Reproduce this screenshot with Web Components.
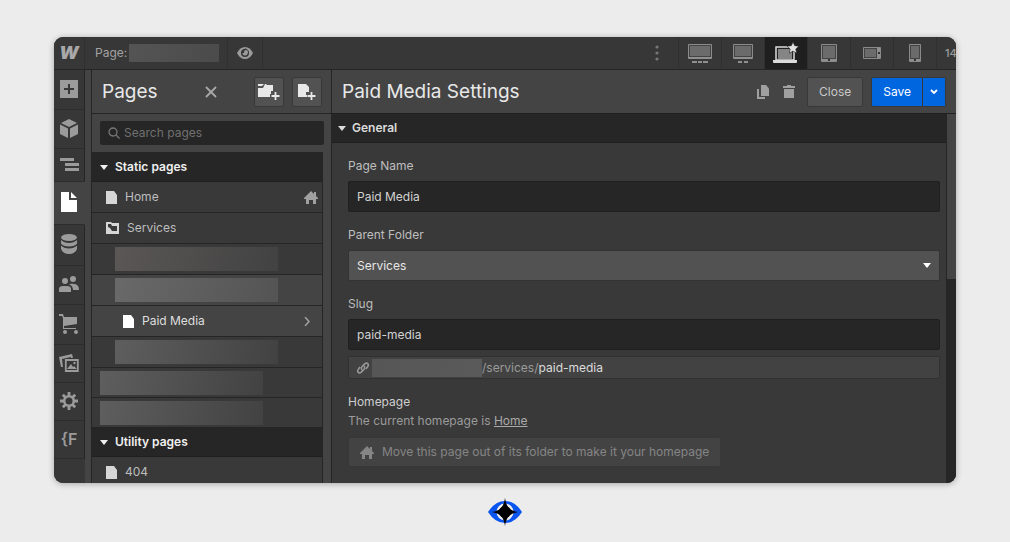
<!DOCTYPE html>
<html lang="en">
<head>
  <meta charset="utf-8">
  <meta name="viewport" content="width=device-width, initial-scale=1">
  <title>Paid Media Settings</title>
  <style>
    :root {
      --bar: #373737;
      --panel: #393939;
      --raised: #444444;
      --well: #262626;
      --line: #252525;
      --button: #525252;
      --text: #bebebe;
      --bright: #e8e8e8;
      --muted: #9b9b9b;
      --blue: #0066e0;
    }
    body {
      margin: 0;
      background: #ececec;
      color: var(--text);
      font: 12px/16px Inter, "Liberation Sans", sans-serif;
    }
  </style>
</head>
<body>
  <designer-app></designer-app>

  <template id="designerApp">
    <style>
      :host {
        display: grid;
        grid-template-rows: minmax(0, 1fr) auto;
        box-sizing: border-box;
        height: 100vh;
        padding: 37px 54px 0;
      }
      .window {
        display: grid;
        grid-template-rows: auto minmax(0, 1fr);
        overflow: hidden;
        border-radius: 9px;
        background: var(--panel);
        box-shadow: 0 1px 6px rgba(0, 0, 0, .3);
      }
      .work {
        display: grid;
        grid-template-columns: auto auto minmax(0, 1fr);
        min-height: 0;
      }
      footer {
        display: flex;
        justify-content: center;
        padding: 15px 0 16px;
      }
    </style>
    <div class="window">
      <top-bar></top-bar>
      <main class="work">
        <tool-rail></tool-rail>
        <pages-panel></pages-panel>
        <settings-panel></settings-panel>
      </main>
    </div>
    <footer><ui-icon name="brand"></ui-icon></footer>
  </template>

  <template id="topBar">
    <style>
      :host {
        display: flex;
        height: 32px;
        background: var(--bar);
        border-bottom: 1px solid var(--line);
        overflow: hidden;
      }
      button {
        display: grid;
        place-items: center;
        flex: none;
        width: 43px;
        padding: 0;
        border: 0;
        border-right: 1px solid #303030;
        background: none;
        color: var(--muted);
        font: inherit;
        box-sizing: border-box;
      }
      .logo {
        width: 31px;
        font-size: 18px;
        font-weight: 900;
        font-style: italic;
        color: #a8a8a8;
      }
      .page {
        display: flex;
        align-items: center;
        gap: 2px;
        padding: 0 8px 0 10px;
        border-right: 1px solid #303030;
        color: #a2a2a2;
      }
      .preview { width: 35px; }
      .more { width: 44px; margin-left: auto; }
      .on { background: #1f1f1f; }
      .width {
        flex: none;
        width: 19px;
        padding-left: 8px;
        box-sizing: border-box;
        line-height: 32px;
        font-size: 11px;
        font-weight: 500;
        white-space: nowrap;
        overflow: hidden;
        color: var(--muted);
      }
    </style>
    <button class="logo" aria-label="Menu">W</button>
    <div class="page">Page: <redacted-text style="--w: 90px; --h: 18px; --from: #545454; --to: #4b4b4b"></redacted-text></div>
    <button class="preview" aria-label="Preview"><ui-icon name="eye"></ui-icon></button>
    <button class="more" aria-label="More"><ui-icon name="dots"></ui-icon></button>
    <button aria-label="Large desktop"><ui-icon name="wide"></ui-icon></button>
    <button aria-label="Desktop"><ui-icon name="desktop"></ui-icon></button>
    <button class="on" aria-label="Base"><ui-icon name="laptop"></ui-icon></button>
    <button aria-label="Tablet"><ui-icon name="tablet"></ui-icon></button>
    <button aria-label="Mobile landscape"><ui-icon name="landscape"></ui-icon></button>
    <button aria-label="Mobile portrait"><ui-icon name="phone"></ui-icon></button>
    <div class="width">14</div>
  </template>

  <template id="toolRail">
    <style>
      :host {
        display: grid;
        grid-template-rows: 40px 39px 33px 43px 41px 39px 40px 38px 38px 38px;
        width: 37px;
        background: linear-gradient(90deg, var(--bar) 31px, var(--raised) 31px);
      }
      button {
        display: grid;
        place-items: center;
        width: 31px;
        padding: 0 0 2px;
        border: 0;
        border-right: 1px solid var(--line);
        border-bottom: 1px solid #2d2d2d;
        background: var(--bar);
        color: var(--muted);
        box-sizing: border-box;
        font: 600 16px/20px Inter, sans-serif;
      }
      .on {
        background: var(--raised);
        border-right-color: var(--raised);
        color: #fff;
      }
    </style>
    <button aria-label="Add"><ui-icon name="add"></ui-icon></button>
    <button aria-label="Components"><ui-icon name="cube"></ui-icon></button>
    <button aria-label="Navigator"><ui-icon name="navigator"></ui-icon></button>
    <button class="on" aria-label="Pages"><ui-icon name="page"></ui-icon></button>
    <button aria-label="CMS"><ui-icon name="database"></ui-icon></button>
    <button aria-label="Users"><ui-icon name="users"></ui-icon></button>
    <button aria-label="Ecommerce"><ui-icon name="cart"></ui-icon></button>
    <button aria-label="Assets"><ui-icon name="images"></ui-icon></button>
    <button aria-label="Settings"><ui-icon name="gear"></ui-icon></button>
    <button>{F</button>
  </template>

  <template id="pagesPanel">
    <style>
      :host {
        display: grid;
        grid-template-rows: auto auto minmax(0, 1fr);
        width: 240px;
        box-sizing: border-box;
        border-left: 1px solid var(--line);
        background: var(--raised);
      }
      header {
        display: flex;
        align-items: center;
        height: 43px;
        padding: 0 10px;
        border-bottom: 1px solid var(--line);
      }
      h2 {
        margin: 0;
        font-size: 19px;
        line-height: 24px;
        font-weight: 400;
        color: var(--bright);
      }
      header button {
        display: grid;
        place-items: center;
        width: 30px;
        height: 30px;
        padding: 0;
        margin-left: 8px;
        border: 1px solid #383838;
        border-radius: 2px;
        background: var(--button);
        color: var(--bright);
        box-sizing: border-box;
      }
      header .close {
        margin: 0 20px 0 auto;
        border: 0;
        background: none;
        color: #a8a8a8;
      }
      .search {
        display: flex;
        align-items: center;
        gap: 4px;
        height: 24px;
        margin: 7px 8px;
        padding: 0 8px;
        border-radius: 2px;
        background: var(--well);
        color: #777;
      }
      input {
        flex: 1;
        min-width: 0;
        padding: 0;
        border: 0;
        outline: 0;
        background: none;
        font: inherit;
        color: var(--text);
      }
      input::placeholder { color: #707070; opacity: 1; }
      .list {
        margin-right: 9px;
        border-top: 1px solid var(--line);
        border-right: 1px solid var(--line);
        background: var(--panel);
        overflow: hidden;
      }
    </style>
    <header>
      <h2>Pages</h2>
      <button class="close" aria-label="Close pages"><ui-icon name="close"></ui-icon></button>
      <button aria-label="New folder"><ui-icon name="newFolder"></ui-icon></button>
      <button aria-label="New page"><ui-icon name="newPage"></ui-icon></button>
    </header>
    <label class="search">
      <ui-icon name="search"></ui-icon>
      <input type="search" placeholder="Search pages" aria-label="Search pages">
    </label>
    <div class="list">
      <section-head>Static pages</section-head>
      <page-row icon="file" end="home">Home</page-row>
      <page-row icon="folder">Services</page-row>
      <page-row class="nested"><redacted-text style="--from: #5a5756"></redacted-text></page-row>
      <page-row class="nested raised"><redacted-text style="--from: #696969; --to: #545454"></redacted-text></page-row>
      <page-row class="nested raised" icon="file" end="chevron">Paid Media</page-row>
      <page-row class="nested"><redacted-text></redacted-text></page-row>
      <page-row class="root"><redacted-text></redacted-text></page-row>
      <page-row class="root"><redacted-text></redacted-text></page-row>
      <section-head>Utility pages</section-head>
      <page-row icon="file">404</page-row>
    </div>
  </template>

  <template id="sectionHead">
    <style>
      :host { display: block; background: var(--well); }
      button {
        display: flex;
        align-items: center;
        gap: 7px;
        width: 100%;
        height: 29px;
        padding: 0 8px;
        border: 0;
        border-bottom: 1px solid #202020;
        background: none;
        font: inherit;
        font-weight: 600;
        color: #f0f0f0;
        box-sizing: border-box;
      }
      :host(.tight) button { gap: 6px; padding-left: 6px; color: #dcdcdc; }
    </style>
    <button aria-expanded="true"><ui-icon name="caret"></ui-icon><slot></slot></button>
  </template>

  <template id="pageRow">
    <style>
      :host { display: block; --pad: 14px; --row: 31px; }
      :host(.nested) { --pad: 31px; color: #dedede; }
      :host(.root) { --row: 30px; }
      :host(.raised) { background: var(--raised); }
      :host(:not([icon])) { --pad: 8px; }
      :host(.nested:not([icon])) { --pad: 23px; }
      button {
        display: flex;
        align-items: center;
        gap: 8px;
        width: 100%;
        height: var(--row);
        padding: 0 4px 0 var(--pad);
        border: 0;
        border-bottom: 1px solid var(--line);
        background: none;
        color: inherit;
        font: inherit;
        box-sizing: border-box;
      }
      .start { color: #d6d6d6; }
      :host(.nested) .start { color: #fff; }
      .end { margin-left: auto; color: #a0a0a0; }
      :host(.nested) .end { margin-right: 8px; }
    </style>
    <button><slot></slot></button>
  </template>

  <template id="redactedText">
    <style>
      :host {
        display: block;
        width: var(--w, 163px);
        height: var(--h, 24px);
        background: linear-gradient(100deg, var(--from, #5e5e5e), var(--to, #424242));
      }
    </style>
  </template>

  <template id="settingsPanel">
    <style>
      :host {
        display: grid;
        grid-template-rows: auto minmax(0, 1fr);
        border-left: 1px solid var(--line);
        background: var(--panel);
      }
      header {
        display: flex;
        align-items: center;
        height: 43px;
        padding: 0 10px;
        border-bottom: 1px solid #202020;
        background: var(--raised);
      }
      h1 {
        margin: 0 auto 0 0;
        font-size: 19px;
        line-height: 24px;
        font-weight: 400;
        color: var(--bright);
      }
      button {
        height: 30px;
        padding: 0 11px;
        border: 1px solid #383838;
        border-radius: 2px;
        background: var(--button);
        color: #c8c8c8;
        font: inherit;
        box-sizing: border-box;
      }
      .icon {
        padding: 0;
        margin-right: 14px;
        border: 0;
        background: none;
        color: #a0a0a0;
      }
      .icon + .icon { margin-right: 12px; }
      .split { display: flex; margin-left: 8px; }
      .split button { background: var(--blue); color: #fff; }
      .split button:first-child { border-radius: 2px 0 0 2px; }
      .split button:last-child {
        padding: 0 7px;
        border-left: 0;
        border-radius: 0 2px 2px 0;
      }
      .body {
        display: grid;
        grid-template-columns: minmax(0, 1fr) 10px;
        min-height: 0;
        overflow: hidden;
      }
      .track { background: var(--well); border-left: 1px solid var(--line); }
      .thumb { height: 44%; background: var(--raised); }
      form {
        display: grid;
        gap: 15px;
        padding: 15px 6px 15px 16px;
      }
      .url {
        display: flex;
        align-items: center;
        height: 23px;
        margin-top: -9px;
        padding: 0 8px;
        border: 1px solid #313131;
        border-radius: 2px;
        background: #424242;
        box-sizing: border-box;
        color: var(--muted);
      }
      .url redacted-text { margin-left: 3px; }
      .url b { font-weight: 400; color: #dcdcdc; }
      h3 { margin: 0 0 3px; font: inherit; color: #cecece; }
      p { margin: 0 0 8px; color: var(--muted); }
      a { color: #aaa; }
      .home {
        display: flex;
        align-items: center;
        gap: 8px;
        background: #434343;
        color: #858585;
      }
    </style>
    <header>
      <h1>Paid Media Settings</h1>
      <button class="icon" aria-label="Duplicate page"><ui-icon name="copy"></ui-icon></button>
      <button class="icon" aria-label="Delete page"><ui-icon name="trash"></ui-icon></button>
      <button>Close</button>
      <div class="split">
        <button>Save</button>
        <button aria-label="Save options"><ui-icon name="down"></ui-icon></button>
      </div>
    </header>
    <div class="body">
      <div>
        <section-head class="tight">General</section-head>
        <form>
          <form-field label="Page Name" value="Paid Media"></form-field>
          <form-field label="Parent Folder" value="Services" type="select"></form-field>
          <form-field label="Slug" value="paid-media"></form-field>
          <div class="url">
            <ui-icon name="link"></ui-icon>
            <redacted-text style="--w: 110px; --h: 18px; --from: #565656; --to: #5a5a5a"></redacted-text>
            <span>/services/<b>paid-media</b></span>
          </div>
          <section>
            <h3>Homepage</h3>
            <p>The current homepage is <a href="#home">Home</a></p>
            <button class="home" type="button" disabled><ui-icon name="home"></ui-icon>Move this page out of its folder to make it your homepage</button>
          </section>
        </form>
      </div>
      <div class="track"><div class="thumb"></div></div>
    </div>
  </template>

  <template id="formField">
    <style>
      :host { display: grid; gap: 7px; }
      .box { display: grid; align-items: center; }
      input, select, ui-icon { grid-area: 1 / 1; }
      input, select {
        appearance: none;
        width: 100%;
        height: 31px;
        padding: 0 8px;
        border: 1px solid #202020;
        border-radius: 2px;
        background: var(--well);
        color: #d2d2d2;
        font: inherit;
        box-sizing: border-box;
      }
      select { background: var(--button); border-color: #333; color: #e8e8e8; }
      ui-icon {
        justify-self: end;
        margin-right: 9px;
        color: #fff;
        pointer-events: none;
      }
    </style>
    <label for="control"></label>
    <div class="box"></div>
  </template>

  <script>
    // name: [width, height, markup]
    const icons = {
      brand: [34, 28, '<path d="M0 14Q7 3 17 3t17 11q-7 11-17 11T0 14Z" fill="#0a55ef"/><circle cx="17" cy="14" r="8.500" fill="#f0f0f0"/><path d="M17 0q1 7 4 10 3 3 9 4-6 1-9 4-3 3-4 10-1-7-4-10-3-3-9-4 6-1 9-4 3-3 4-10Z" fill="#000"/><circle cx="17" cy="14" r="6" fill="#000"/>'],
      eye: [16, 12, '<path d="M0 6Q3 0 8 0t8 6q-3 6-8 6T0 6Z"/><circle cx="8" cy="6" r="4" fill="#373737"/><path d="M8 6V3.500q2.500 0 2.500 2.500T8 8.500 5.500 6Z"/><path d="M8 1.500a4.500 4.500 0 0 1 2 .5L8 6H4Z" fill="#373737"/><circle cx="9" cy="5" r="2"/>'],
      dots: [4, 16, '<g fill="#777"><circle cx="2" cy="2" r="1.600"/><circle cx="2" cy="8" r="1.600"/><circle cx="2" cy="14" r="1.600"/></g>'],
      wide: [24, 19, '<path d="M.5.5h23v14H.5Z" fill="#444" stroke="#8a8a8a"/><path d="M2 2h20v10H2Z" fill="#6b6b6b"/><path d="M1 13h22v2H1ZM4 17h5v2H4ZM10 17h4v2h-4ZM15 17h5v2h-5Z" fill="#8f8f8f"/>'],
      desktop: [20, 19, '<path d="M.5.5h19v14H.5Z" fill="#444" stroke="#8a8a8a"/><path d="M2 2h16v10H2Z" fill="#6b6b6b"/><path d="M1 13h18v2H1ZM5 17h4v2H5ZM11 17h4v2h-4Z" fill="#8f8f8f"/>'],
      laptop: [26, 22, '<path d="M3 5h18v13H3Z" fill="#222" stroke="#dcdcdc" stroke-width="1.500"/><path d="M5 7h14v10H5Z" fill="#858585"/><path d="M0 18h24v2q0 1-1 1H1q-1 0-1-1Z" fill="#dcdcdc"/><path d="m20 0 1.700 3.700 4.200.5-3.100 2.800.9 4.200-3.700-2.100-3.700 2.100.9-4.200-3.100-2.800 4.200-.5Z" fill="#e2e2e2" stroke="#222" stroke-width=".6"/>'],
      tablet: [16, 18, '<path d="M.5.5h15v17H.5Z" fill="#444" stroke="#8a8a8a"/><path d="M2 2h12v12H2Z" fill="#6b6b6b"/><path d="M1 15h14v2H1Z" fill="#8f8f8f"/><path d="M7 15h2v2H7Z" fill="#333"/>'],
      landscape: [18, 12, '<path d="M.5.5h17v11H.5Z" fill="#444" stroke="#8a8a8a"/><path d="M2 2h11v8H2Z" fill="#6b6b6b"/><path d="M14 1h3v10h-3Z" fill="#8f8f8f"/><path d="M15 5h2v2h-2Z" fill="#333"/>'],
      phone: [12, 18, '<path d="M.5.5h11v17H.5Z" fill="#444" stroke="#8a8a8a"/><path d="M2 2h8v12H2Z" fill="#6b6b6b"/><path d="M1 15h10v2H1Z" fill="#8f8f8f"/><path d="M5 15h2v2H5Z" fill="#333"/>'],
      add: [18, 18, '<path fill-rule="evenodd" d="M0 0h18v18H0ZM8 4v4H4v2h4v4h2v-4h4V8h-4V4Z"/>'],
      cube: [18, 19, '<path d="m9 0 8 4-8 4-8-4ZM0 5.500l8 4V19l-8-4ZM18 5.500l-8 4V19l8-4Z"/>'],
      navigator: [19, 13, '<path d="M0 0h14v3H0ZM5 5h14v3H5ZM5 10h14v3H5Z"/>'],
      page: [16, 20, '<path d="M0 0h8v8h8v12H0ZM10 0v6h6Z"/>'],
      database: [16, 20, '<ellipse cx="8" cy="3.500" rx="8" ry="3.500"/><path d="M0 6q3 3 8 3t8-3v3.500q-2 3-8 3t-8-3ZM0 11.500q3 3 8 3t8-3V15q-2 5-8 5T0 15Z"/>'],
      users: [20, 16, '<circle cx="6" cy="5" r="3"/><circle cx="14" cy="3" r="3"/><path d="M0 16v-3q0-3 4-3h4q4 0 4 3v3ZM10 8q7-1 9 2 1 1 1 4h-6q0-4-4-6Z"/>'],
      cart: [20, 20, '<path d="M0 0h4l1 3h13v7L5 12v2h12v1H4V4L3 2H0Z"/><circle cx="6" cy="18" r="2"/><circle cx="17" cy="18" r="2"/>'],
      images: [20, 18, '<path d="M0 3 13 0l1 4h-2V3L3 5l1 8H2Z"/><path d="M6.800 6h12v11h-12Z" fill="none" stroke="currentColor" stroke-width="1.800"/><path d="m8 15 4-5 2 3 1-1 3 3Z"/><circle cx="15.500" cy="9" r="1.200"/>'],
      gear: [18, 18, '<circle cx="9" cy="9" r="4.800" fill="none" stroke="currentColor" stroke-width="2.600"/><path d="M9 0v4M9 14v4M0 9h4M14 9h4M2.800 2.800l3 3M12.200 12.200l3 3M2.800 15.200l3-3M12.200 5.800l3-3" stroke="currentColor" stroke-width="2.800"/>'],
      close: [12, 12, '<path d="m1 1 10 10M11 1 1 11" stroke="currentColor" stroke-width="1.800"/>'],
      newFolder: [22, 16, '<path d="M0 0h6L4 2H0ZM7 0h1l1 1h6v6h-2v3h-1v3H0V4h5Z"/><path d="M17.500 8v8M13.500 12h8" stroke="currentColor" stroke-width="1.800"/>'],
      newPage: [18, 16, '<path d="M0 0h8l3 3v5H8v3h1v2H0Z"/><path d="M13.500 8v8M9.500 12h8" stroke="currentColor" stroke-width="1.800"/>'],
      search: [12, 12, '<circle cx="5" cy="5" r="4" fill="none" stroke="currentColor" stroke-width="1.300"/><path d="m8 8 3.500 3.500" stroke="currentColor" stroke-width="1.300"/>'],
      caret: [8, 5, '<path d="M0 0h8L4 5Z"/>'],
      file: [11, 13, '<path d="M0 0h8l3 4v9H0Z"/>'],
      folder: [13, 12, '<path fill-rule="evenodd" d="M0 0h5l1 1h7v11H0ZM2 2v3l2 1 2 3h5V4H6L5 2Z"/>'],
      home: [14, 13, '<path d="m7 0 3 3V1h2v4l2 2v1h-2v5H9V9H5v4H2V8H0V7Z"/>'],
      chevron: [6, 9, '<path d="m1 0 4 4.500L1 9" fill="none" stroke="currentColor" stroke-width="1.500"/>'],
      copy: [12, 14, '<path d="M4 0h5l3 3.500V11H4Z"/><path d="M1 4v9h7" fill="none" stroke="currentColor" stroke-width="2"/>'],
      trash: [12, 13, '<path d="M0 1h4V0h4v1h4v2H0ZM1 4h10v9H1Z"/>'],
      down: [8, 5, '<path d="m1 1 3 3 3-3" fill="none" stroke="currentColor" stroke-width="1.800"/>'],
      link: [12, 12, '<path d="M5 8Q3.500 6 5.500 4L8 1.600q1.500-1 2.700 0 1.200 1.400 0 3L9 7M7 4q1.500 2-.5 4L4 10.400q-1.500 1-2.700 0-1.200-1.400 0-3L3 5" fill="none" stroke="currentColor" stroke-width="1.500"/>']
    };

    // Clones the template with the given id into an open shadow root
    class TemplateElement extends HTMLElement {
      constructor () {
        super();
        const t = document.getElementById(this.constructor.template);
        this.attachShadow({mode: 'open'}).appendChild(t.content.cloneNode(true));
      }
    }

    class UiIcon extends HTMLElement {
      connectedCallback () {
        if (this.shadowRoot) return;
        const [w, h, markup] = icons[this.getAttribute('name')];
        this.attachShadow({mode: 'open'}).innerHTML = `
          <style>:host { display: block; flex: none; } svg { display: block; fill: currentColor; }</style>
          <svg width="${w}" height="${h}" viewBox="0 0 ${w} ${h}" aria-hidden="true">${markup}</svg>`;
      }
    }

    class PageRow extends TemplateElement {
      static template = 'pageRow';

      connectedCallback () {
        const button = this.shadowRoot.querySelector('button');
        this.addIcon(button, 'icon', 'start', 'prepend');
        this.addIcon(button, 'end', 'end', 'append');
      }

      addIcon (button, attr, cls, place) {
        if (!this.hasAttribute(attr) || button.querySelector('.' + cls)) return;
        const icon = document.createElement('ui-icon');
        icon.className = cls;
        icon.setAttribute('name', this.getAttribute(attr));
        button[place](icon);
      }
    }

    class FormField extends TemplateElement {
      static template = 'formField';

      connectedCallback () {
        const box = this.shadowRoot.querySelector('.box');
        const value = this.getAttribute('value');
        this.shadowRoot.querySelector('label').textContent = this.getAttribute('label');
        if (this.getAttribute('type') === 'select') {
          box.innerHTML = `<select id="control"><option>${value}</option></select><ui-icon name="caret"></ui-icon>`;
        } else {
          box.innerHTML = `<input id="control" type="text" value="${value}">`;
        }
      }
    }

    customElements.define('ui-icon', UiIcon);
    customElements.define('redacted-text', class extends TemplateElement { static template = 'redactedText'; });
    customElements.define('section-head', class extends TemplateElement { static template = 'sectionHead'; });
    customElements.define('page-row', PageRow);
    customElements.define('form-field', FormField);
    customElements.define('top-bar', class extends TemplateElement { static template = 'topBar'; });
    customElements.define('tool-rail', class extends TemplateElement { static template = 'toolRail'; });
    customElements.define('pages-panel', class extends TemplateElement { static template = 'pagesPanel'; });
    customElements.define('settings-panel', class extends TemplateElement { static template = 'settingsPanel'; });
    customElements.define('designer-app', class extends TemplateElement { static template = 'designerApp'; });
  </script>
</body>
</html>
